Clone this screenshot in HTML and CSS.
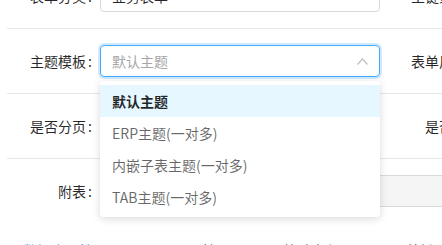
FILE: index.html
```html
<!DOCTYPE html>
<html><head><title>Online form - base settings</title>
<meta charset="utf-8">
<link rel="stylesheet" href="styles.css">
</head>
<body>
<div class="page">
<div class="form">
	<div class="row">
		<div class="item">
			<label class="lbl">表单分类</label>
			<div class="input">业务表单</div>
		</div>
		<div class="item">
			<label class="lbl">主键策略</label>
			<div class="input">UUID</div>
		</div>
	</div>
	<div class="row">
		<div class="item">
			<label class="lbl">主题模板</label>
			<div class="input select open">
				<span class="value">默认主题</span>
				<svg class="arrow" width="11" height="7" viewBox="0 0 11 7"><polyline points="0.5,6.5 5.5,1 10.5,6.5" fill="none" stroke="#bfbfbf" stroke-width="1.2"/></svg>
				<!-- dropdown sits over the rows below -->
				<ul class="dropdown">
					<li class="active">默认主题</li>
					<li>ERP主题(一对多)</li>
					<li>内嵌子表主题(一对多)</li>
					<li>TAB主题(一对多)</li>
				</ul>
			</div>
		</div>
		<div class="item">
			<label class="lbl">表单风格</label>
			<div class="input">一列</div>
		</div>
	</div>
	<div class="row">
		<div class="item">
			<label class="lbl">是否分页</label>
			<div class="input"></div>
		</div>
		<div class="item">
			<label class="lbl">是否树</label>
			<div class="input">否</div>
		</div>
	</div>
	<div class="row last">
		<div class="item wide">
			<label class="lbl">附表</label>
			<div class="input disabled"></div>
		</div>
	</div>
</div>

<div class="tabs">
	<span class="tab current">数据库属性</span>
	<span class="tab">页面属性</span>
	<span class="tab">校验字段</span>
	<span class="tab">外键</span>
</div>
</div>
</body></html>
```

FILE: styles.css
```css
html, body { margin: 0; padding: 0; overflow: hidden; background: #fff; }
body {
	font-family: "Noto Sans CJK SC", "Noto Sans", sans-serif;
	font-size: 14px;
	color: rgba(0,0,0,0.85);
}
.page { overflow: hidden; height: 245px; }
.form { margin-top: -36px; padding-left: 7px; }
.row {
	display: grid;
	grid-template-columns: 373px 373px;
	column-gap: 8px;
	padding: 16px 0;
	border-bottom: 1px solid #e8e8e8;
	line-height: 22px;
}
.row.last { border-bottom: none; display: block; }
.item { display: flex; align-items: center; }
.lbl {
	width: 93px;
	flex: none;
	text-align: right;
	white-space: nowrap;
}
.lbl::after { content: ":"; margin: 0 8px 0 2px; }
.input {
	position: relative;
	box-sizing: border-box;
	width: 280px;
	height: 32px;
	flex: none;
	padding: 4px 11px;
	border: 1px solid #d9d9d9;
	border-radius: 4px;
	white-space: nowrap;
}
.select.open {
	border-color: #40a9ff;
	box-shadow: 0 0 0 2px rgba(24,144,255,0.2);
}
.select .value { color: #a6a6a6; }
.arrow { position: absolute; right: 11px; top: 12px; }
.disabled { width: 660px; background: #f5f5f5; }
.dropdown {
	position: absolute;
	z-index: 5;
	left: -1px;
	top: 35px;
	width: 280px;
	margin: 0;
	padding: 4px 0;
	list-style: none;
	background: #fff;
	border-radius: 4px;
	box-shadow: 0 2px 8px rgba(0,0,0,0.15);
}
.dropdown li {
	padding: 5px 12px;
	line-height: 22px;
	color: rgba(0,0,0,0.6);
}
.dropdown li.active {
	background: #e6f7ff;
	color: rgba(0,0,0,0.85);
	font-weight: 600;
}
.tabs {
	margin-top: 5px;
	padding-left: 7px;
	white-space: nowrap;
	line-height: 21px;
}
.tab {
	display: inline-block;
	padding: 12px 16px;
	margin-right: 32px;
	color: rgba(0,0,0,0.65);
}
.tab.current { color: #1890ff; }
```
